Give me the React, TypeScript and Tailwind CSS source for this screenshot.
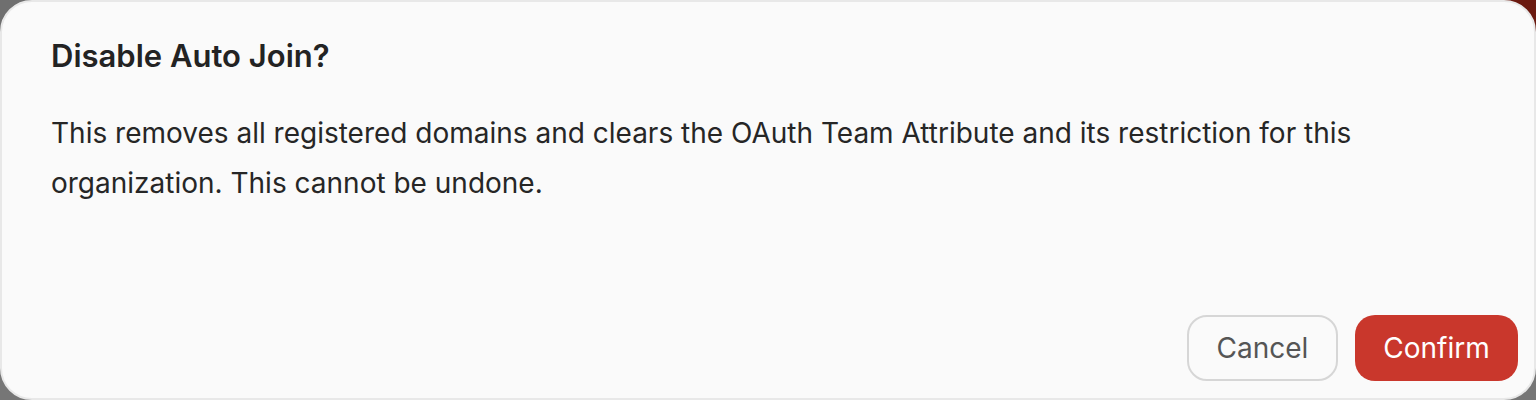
import React from 'react';

// Confirmation dialog for turning off auto join on an organization
export default function App() {
  return (
    <div
      className="h-[400px] w-full bg-[linear-gradient(to_bottom,transparent_50%,#767676_50%),linear-gradient(to_right,#6f6f6f_50%,#6b1a10_50%)]"
      style={{ fontFamily: 'Inter, "Noto Sans", sans-serif' }}
    >
      <div className="flex h-full w-full flex-col rounded-[32px] border-2 border-[#e8e8e8] bg-[#fafafa] pl-[49px] pr-[16px] pb-[17px] pt-[36px]">
        <h2 className="text-[31px] font-semibold leading-[36px] text-[#232323]">Disable Auto Join?</h2>
        <p className="mt-[34px] max-w-[1330px] text-[28px] leading-[50px] text-[#262626]">
          This removes all registered domains and clears the OAuth Team Attribute and its restriction for this
          organization. This cannot be undone.
        </p>
        <div className="mt-auto flex justify-end gap-[17px]">
          <button className="h-[66px] w-[151px] rounded-[20px] border-2 border-[#d6d6d6] bg-[#fafafa] text-[28px] text-[#555555]">
            Cancel
          </button>
          <button className="h-[66px] w-[163px] rounded-[20px] bg-[#c9372c] text-[28px] text-white">
            Confirm
          </button>
        </div>
      </div>
    </div>
  );
}
